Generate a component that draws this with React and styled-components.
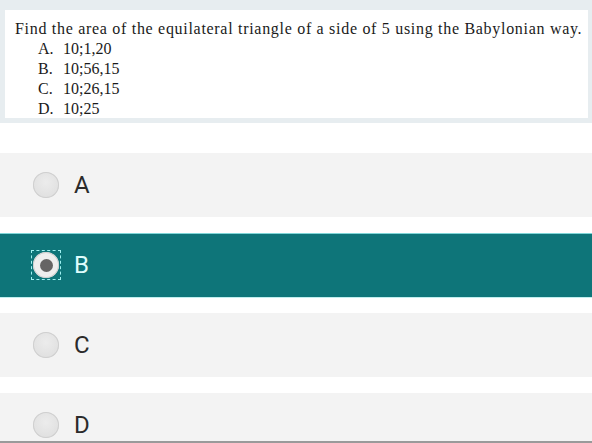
import React, {useState} from 'react';
import styled, {createGlobalStyle} from "styled-components";

const GlobalStyle = createGlobalStyle`
    html, body {
        margin: 0;
        padding: 0;
        background: #FFFFFF;
        overflow: hidden;
    }
`

const Page = styled.div`
    width: 592px;
    height: 443px;
    overflow: hidden;
    border-bottom: 2px solid #9a9a9a;
    box-sizing: border-box;
`

const QuestionFrame = styled.div`
    background: #e7edf0;
    padding: 10px 4px 5px 5px;
`

const QuestionBox = styled.div`
    height: 108px;
    box-sizing: border-box;
    background: #FFFFFF;
    padding: 9px 0 0 10px;
    font-family: "Liberation Serif", "Times New Roman", serif;
    color: #1a1a1a;
`

const Prompt = styled.div`
    font-size: 16px;
    line-height: 20px;
    letter-spacing: 0.7px;
    white-space: nowrap;
`

const ChoiceList = styled.ol`
    margin: 0;
    padding: 0 0 0 23px;
    list-style: none;
`

const ChoiceLine = styled.li`
    display: flex;
    line-height: 20px;
    font-size: 16px;
`

const ChoiceMark = styled.span`
    width: 25px;
`

const Options = styled.div`
    display: flex;
    flex-direction: column;
    gap: 16px;
    padding-top: 30px;
`

const Option = styled.div`
    display: flex;
    align-items: center;
    gap: 13px;
    height: 64px;
    padding-left: 33px;
    background: ${props => props.selected ? "#0e7579" : "#f3f3f3"};
    box-shadow: ${props => props.selected ? "inset 0 1px 0 #7fd6d8, 0 1px 0 #bfeeee" : "none"};
    cursor: pointer;
`

const RadioWrap = styled.span`
    display: flex;
    align-items: center;
    justify-content: center;
    width: 30px;
    height: 30px;
    margin-left: -2px;
    box-sizing: border-box;
    border: 1.5px dashed ${props => props.focused ? "#9ff0f0" : "transparent"};
`

const Radio = styled.span`
    display: flex;
    align-items: center;
    justify-content: center;
    width: 26px;
    height: 26px;
    border-radius: 50%;
    background: ${props => props.checked ? "#eeeeee" : "radial-gradient(circle at 50% 40%, #ececec, #dcdcdc)"};
    box-shadow: inset 0 0 0 1px #cfcfcf;
`

const Dot = styled.span`
    width: 13px;
    height: 13px;
    border-radius: 50%;
    background: #666464;
`

const OptionLabel = styled.span`
    font-family: Roboto, "Liberation Sans", sans-serif;
    font-size: 24px;
    color: ${props => props.selected ? "#dffcfc" : "#2b2b2b"};
`

const choices = [
    ["A.", "10;1,20"],
    ["B.", "10;56,15"],
    ["C.", "10;26,15"],
    ["D.", "10;25"],
]

function App() {
    const [selected, setSelected] = useState("B")

    return (
        <Page>
            <GlobalStyle />
            <QuestionFrame>
                <QuestionBox>
                    <Prompt>Find the area of the equilateral triangle of a side of 5 using the Babylonian way.</Prompt>
                    <ChoiceList>
                        {choices.map(([mark, value]) => (
                            <ChoiceLine key={mark}>
                                <ChoiceMark>{mark}</ChoiceMark>
                                <span>{value}</span>
                            </ChoiceLine>
                        ))}
                    </ChoiceList>
                </QuestionBox>
            </QuestionFrame>

            <Options>
                {["A", "B", "C", "D"].map(letter => {
                    const isSelected = letter === selected
                    return (
                        <Option key={letter} selected={isSelected} onClick={() => setSelected(letter)}>
                            <RadioWrap focused={isSelected}>
                                <Radio checked={isSelected}>
                                    {isSelected && <Dot />}
                                </Radio>
                            </RadioWrap>
                            <OptionLabel selected={isSelected}>{letter}</OptionLabel>
                        </Option>
                    )
                })}
            </Options>
        </Page>
    );
}

export default App;
